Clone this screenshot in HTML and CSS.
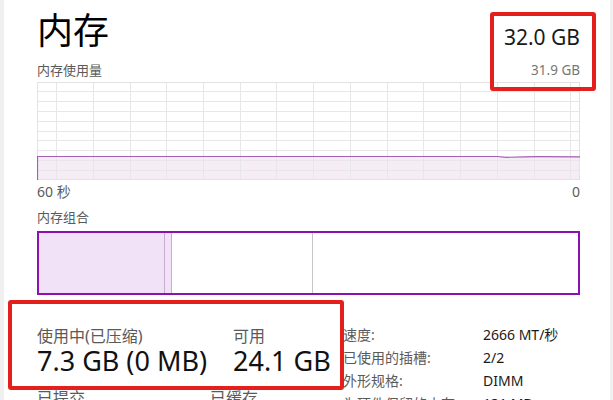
FILE: index.html
```html
<!DOCTYPE html>
<html lang="zh-CN">
<head>
    <meta charset="UTF-8">
    <meta name="viewport" content="width=device-width, initial-scale=1.0">
    <title>内存</title>
    <link rel="stylesheet" href="styles.css">
</head>
<body>
    <div class="window">
        <div class="content">
            <div class="head">
                <h1 class="title">内存</h1>
                <div class="total">32.0 GB</div>
            </div>
            <div class="subhead">
                <span>内存使用量</span>
                <span class="sub-total">31.9 GB</span>
            </div>

            <svg class="chart" width="543" height="98" viewBox="0 0 543 98">
                <path class="area" d="M0.5 74.5 H460 L470 75.3 L488 74.8 L500 74.6 L543 74.8 V98 H0.5 Z"/>
                <g class="grid">
                    <line x1="0" y1="9.5" x2="543" y2="9.5"/>
                    <line x1="0" y1="19.5" x2="543" y2="19.5"/>
                    <line x1="0" y1="29.5" x2="543" y2="29.5"/>
                    <line x1="0" y1="39.5" x2="543" y2="39.5"/>
                    <line x1="0" y1="49.5" x2="543" y2="49.5"/>
                    <line x1="0" y1="58.5" x2="543" y2="58.5"/>
                    <line x1="0" y1="68.5" x2="543" y2="68.5"/>
                    <line x1="0" y1="78.5" x2="543" y2="78.5"/>
                    <line x1="0" y1="88.5" x2="543" y2="88.5"/>
                    <line x1="19.5" y1="0" x2="19.5" y2="98"/>
                    <line x1="56.5" y1="0" x2="56.5" y2="98"/>
                    <line x1="93.5" y1="0" x2="93.5" y2="98"/>
                    <line x1="129.5" y1="0" x2="129.5" y2="98"/>
                    <line x1="166.5" y1="0" x2="166.5" y2="98"/>
                    <line x1="203.5" y1="0" x2="203.5" y2="98"/>
                    <line x1="239.5" y1="0" x2="239.5" y2="98"/>
                    <line x1="276.5" y1="0" x2="276.5" y2="98"/>
                    <line x1="313.5" y1="0" x2="313.5" y2="98"/>
                    <line x1="350.5" y1="0" x2="350.5" y2="98"/>
                    <line x1="386.5" y1="0" x2="386.5" y2="98"/>
                    <line x1="423.5" y1="0" x2="423.5" y2="98"/>
                    <line x1="460.5" y1="0" x2="460.5" y2="98"/>
                    <line x1="497.5" y1="0" x2="497.5" y2="98"/>
                    <line x1="533.5" y1="0" x2="533.5" y2="98"/>
                </g>
                <rect class="frame" x="0.5" y="0.5" width="542" height="97"/>
                <path class="line" d="M0.5 98 V74.5 H460 L470 75.3 L488 74.8 L500 74.6 L543 74.8"/>
            </svg>

            <div class="axis">
                <span>60 秒</span>
                <span>0</span>
            </div>
            <div class="section-label">内存组合</div>

            <div class="combo">
                <div class="seg seg-used"></div>
                <div class="seg seg-modified"></div>
                <div class="seg seg-standby"></div>
                <div class="seg seg-free"></div>
            </div>

            <div class="stats">
                <div class="main-stats">
                    <div class="big-grid">
                        <div class="stat-label">使用中(已压缩)</div>
                        <div class="stat-label">可用</div>
                        <div class="stat-value">7.3 GB (0 MB)</div>
                        <div class="stat-value">24.1 GB</div>
                    </div>
                    <div class="small-row">
                        <span class="stat-label">已提交</span>
                        <span class="stat-label cached">已缓存</span>
                    </div>
                </div>
                <div class="specs">
                    <span class="spec-label">速度:</span>
                    <span class="spec-value">2666 MT/秒</span>
                    <span class="spec-label">已使用的插槽:</span>
                    <span class="spec-value">2/2</span>
                    <span class="spec-label">外形规格:</span>
                    <span class="spec-value">DIMM</span>
                    <span class="spec-label">为硬件保留的内存:</span>
                    <span class="spec-value">131 MB</span>
                </div>
            </div>
        </div>

        <div class="mark mark-total"></div>
        <div class="mark mark-usage"></div>
    </div>
</body>
</html>
```

FILE: styles.css
```css
body {
    margin: 0;
    background-color: #ffffff;
    font-family: "Noto Sans", "Noto Sans CJK SC", sans-serif;
    color: #1a1a1a;
}

.window {
    position: relative;
    height: 400px;
    overflow: hidden;
    box-sizing: border-box;
    border-left: 4px solid #f0f0f0;
    border-right: 3px solid #f0f0f0;
}

.content {
    padding: 0 30px 0 33px;
}

.head {
    display: flex;
    justify-content: space-between;
    height: 58px;
}

.title {
    margin: 13px 0 0;
    font-size: 36px;
    font-weight: normal;
    line-height: 36px;
    color: #000000;
}

.total {
    margin-top: 27px;
    font-size: 21px;
    line-height: 21px;
}

.subhead {
    display: flex;
    justify-content: space-between;
    height: 24px;
    padding-top: 4px;
    box-sizing: border-box;
    font-size: 13px;
    line-height: 16px;
    color: #5a5a5a;
}

.sub-total {
    font-size: 13.5px;
    color: #777777;
}

.chart {
    display: block;
}

.chart .area {
    fill: #f5ecf6;
}

.chart .grid line {
    stroke: #e8e6e8;
    stroke-width: 1;
    shape-rendering: crispEdges;
}

.chart .frame {
    fill: none;
    stroke: #e2e2e2;
    shape-rendering: crispEdges;
}

.chart .line {
    fill: none;
    stroke: #a160b0;
    stroke-width: 1.2;
}

.axis {
    display: flex;
    justify-content: space-between;
    height: 24px;
    padding-top: 4px;
    box-sizing: border-box;
    font-size: 14px;
    line-height: 16px;
    color: #5a5a5a;
}

.section-label {
    padding: 5px 0 6px;
    font-size: 13px;
    line-height: 16px;
    color: #5a5a5a;
}

.combo {
    display: flex;
    height: 64px;
    box-sizing: border-box;
    border: 2px solid #8b12ae;
}

.seg {
    height: 100%;
}

.seg-used {
    width: 125px;
    background-color: #f1e2f7;
    border-right: 1px solid #c9abd3;
}

.seg-modified {
    width: 6px;
    background-color: #f1e2f7;
    border-right: 1px solid #c9abd3;
}

.seg-standby {
    width: 140px;
    border-right: 1px solid #c8c2c9;
}

.seg-free {
    flex: 1;
}

.stats {
    display: flex;
}

.main-stats {
    width: 306px;
    padding-top: 32px;
}

.big-grid {
    display: grid;
    grid-template-columns: 196px auto;
    row-gap: 2px;
}

.stat-label {
    font-size: 16px;
    line-height: 18px;
    color: #5a5a5a;
}

.stat-value {
    font-size: 27px;
    line-height: 28px;
    color: #111111;
}

.small-row {
    display: flex;
    margin-top: 14px;
}

.cached {
    margin-left: 125px;
}

.specs {
    display: grid;
    grid-template-columns: 140px auto;
    grid-auto-rows: 23px;
    padding-top: 28px;
    font-size: 14px;
    line-height: 23px;
}

.spec-label {
    color: #5a5a5a;
    white-space: nowrap;
}

.spec-value {
    color: #1a1a1a;
}

.mark {
    position: absolute;
    box-sizing: border-box;
    border: 4px solid #e3201b;
    border-radius: 3px;
}

.mark-total {
    left: 486px;
    top: 12px;
    width: 106px;
    height: 79px;
}

.mark-usage {
    left: 4px;
    top: 300px;
    width: 336px;
    height: 90px;
}
```
